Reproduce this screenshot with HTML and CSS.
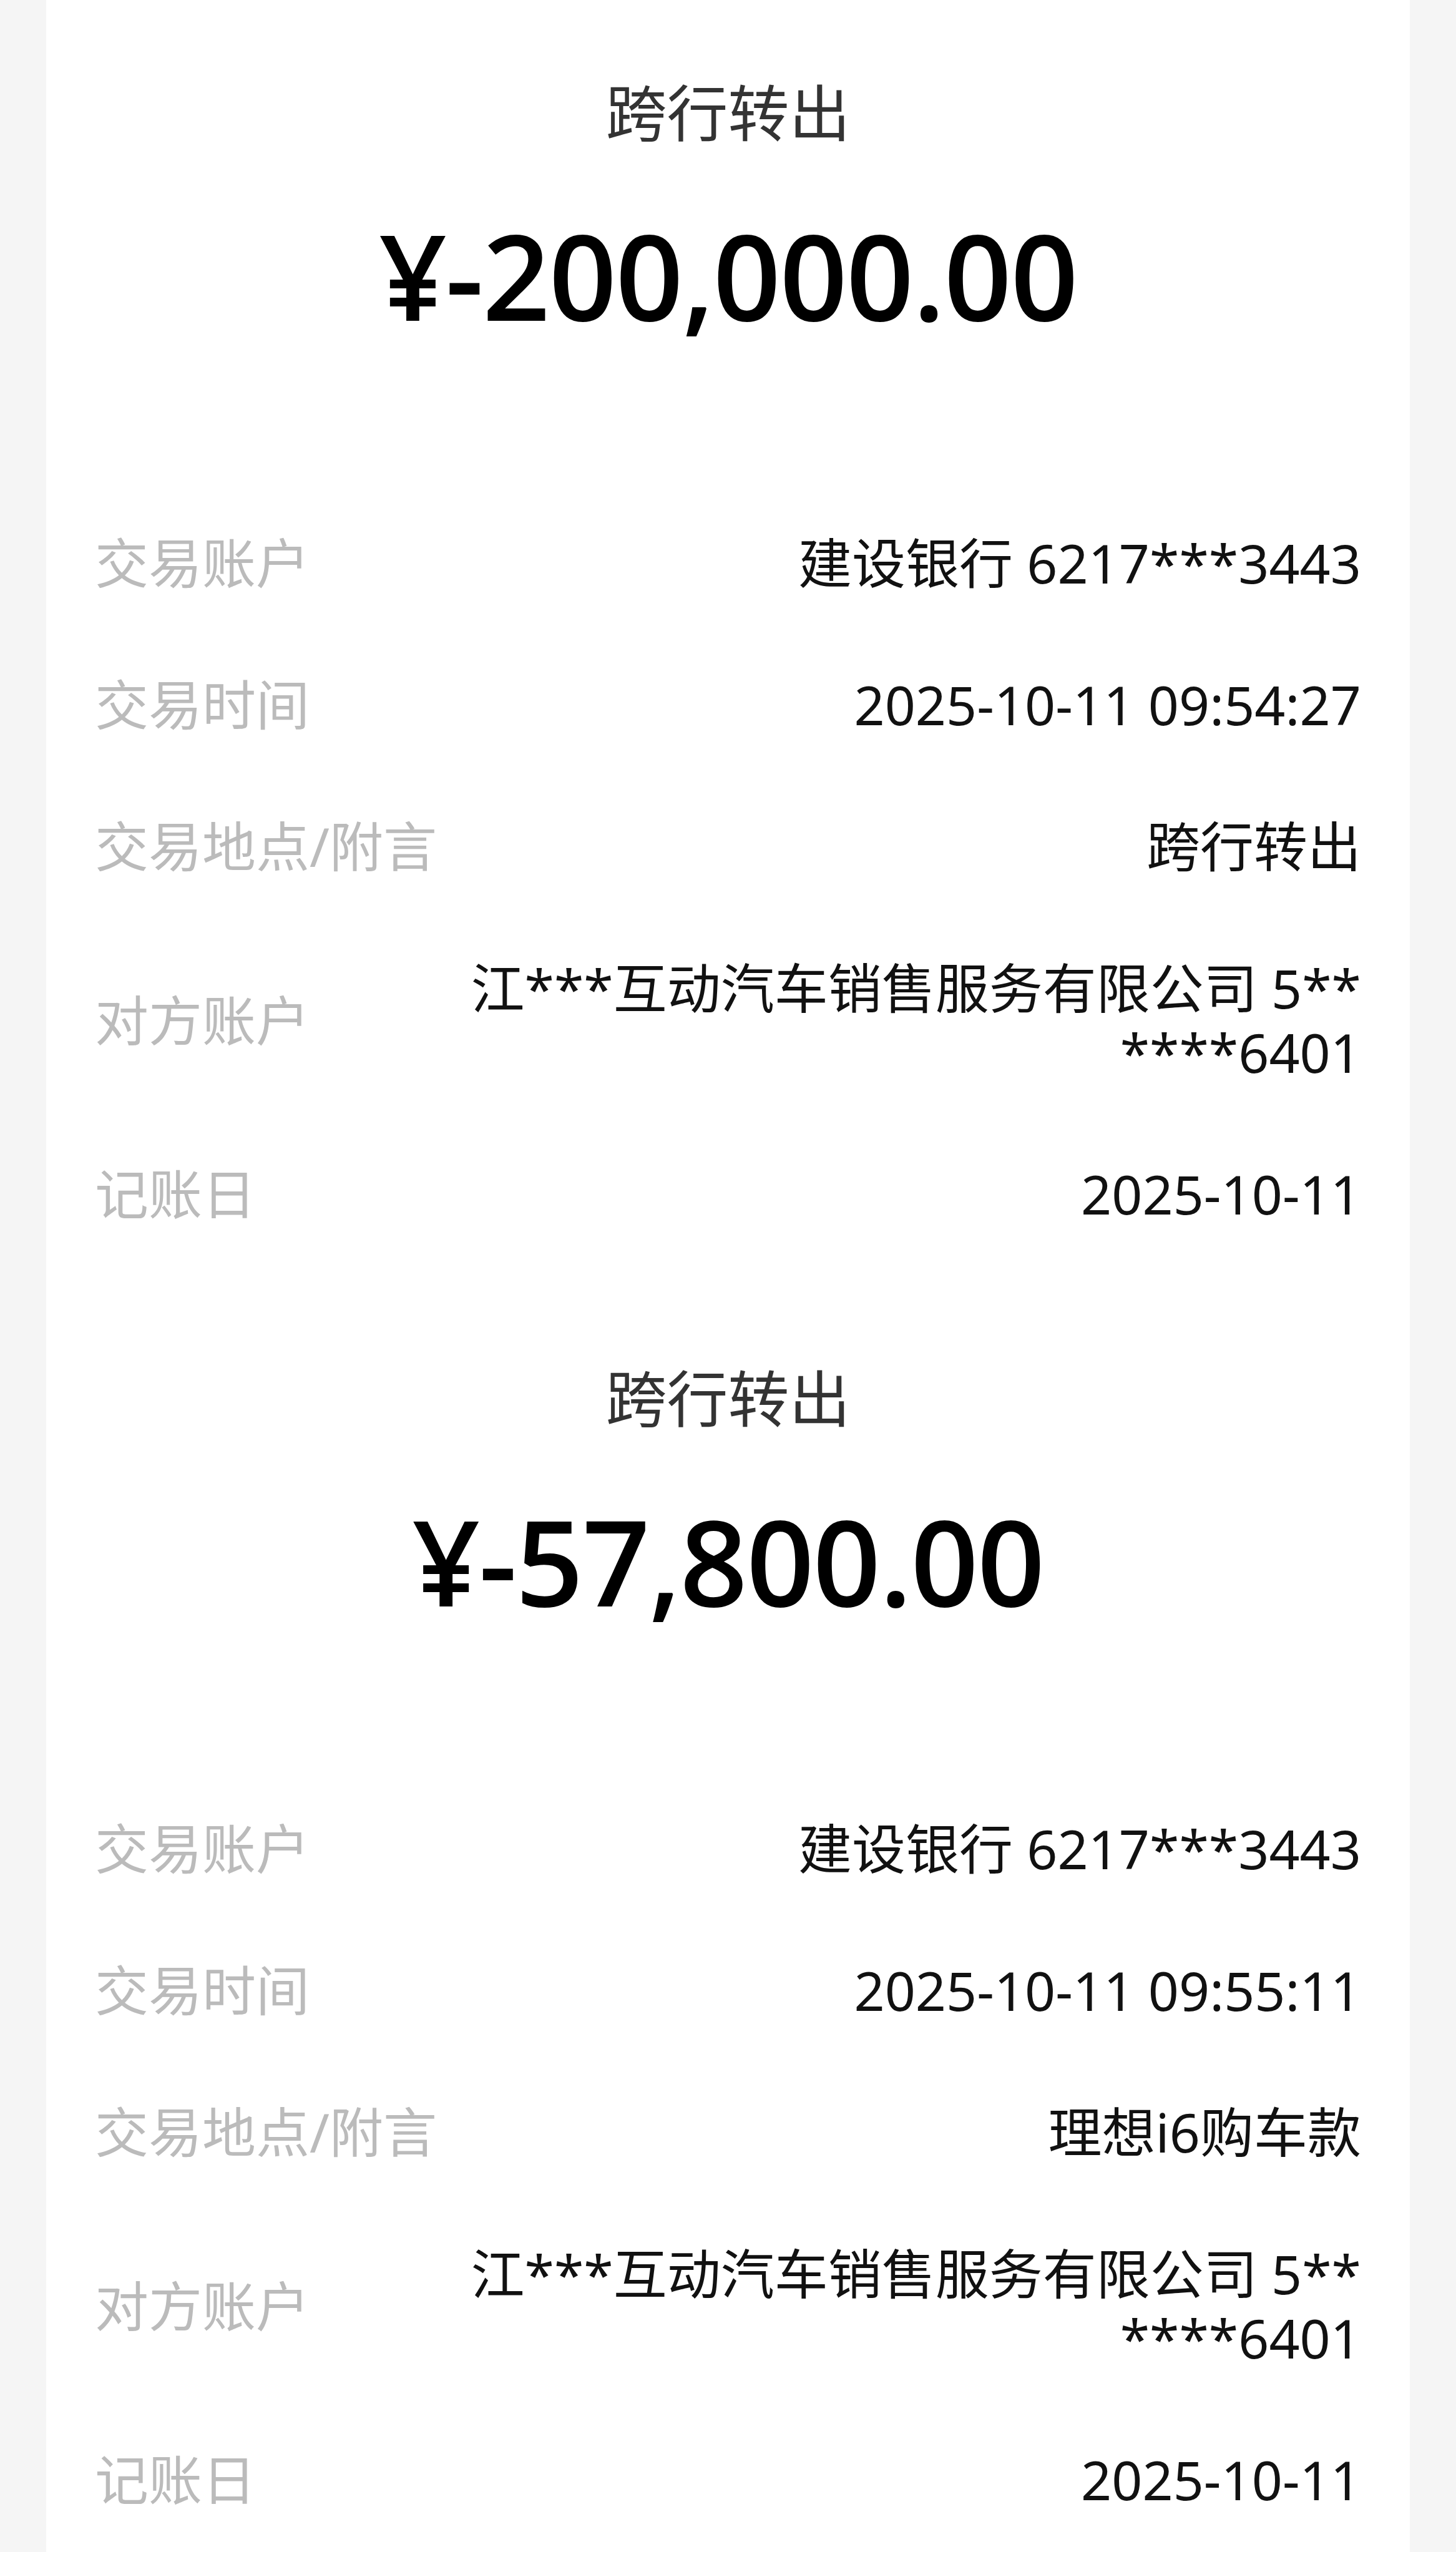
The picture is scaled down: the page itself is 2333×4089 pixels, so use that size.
FILE: index.html
```html
<!DOCTYPE html>
<html>
<head>
  <meta charset="utf-8">
  <title>交易详情</title>
  <link rel="stylesheet" href="styles.css">
</head>
<body>
  <div class="card">
    <div class="txn">
      <div class="txn-head">
        <div class="txn-type">跨行转出</div>
        <div class="txn-amount">¥-200,000.00</div>
      </div>
      <div class="detail-row">
        <span class="detail-label">交易账户</span>
        <span class="detail-value">建设银行 6217***3443</span>
      </div>
      <div class="detail-row">
        <span class="detail-label">交易时间</span>
        <span class="detail-value">2025-10-11 09:54:27</span>
      </div>
      <div class="detail-row">
        <span class="detail-label">交易地点/附言</span>
        <span class="detail-value">跨行转出</span>
      </div>
      <div class="detail-row">
        <span class="detail-label">对方账户</span>
        <span class="detail-value">江***互动汽车销售服务有限公司 5******6401</span>
      </div>
      <div class="detail-row">
        <span class="detail-label">记账日</span>
        <span class="detail-value">2025-10-11</span>
      </div>
    </div>

    <div class="txn">
      <div class="txn-head">
        <div class="txn-type">跨行转出</div>
        <div class="txn-amount">¥-57,800.00</div>
      </div>
      <div class="detail-row">
        <span class="detail-label">交易账户</span>
        <span class="detail-value">建设银行 6217***3443</span>
      </div>
      <div class="detail-row">
        <span class="detail-label">交易时间</span>
        <span class="detail-value">2025-10-11 09:55:11</span>
      </div>
      <div class="detail-row">
        <span class="detail-label">交易地点/附言</span>
        <span class="detail-value">理想i6购车款</span>
      </div>
      <div class="detail-row">
        <span class="detail-label">对方账户</span>
        <span class="detail-value">江***互动汽车销售服务有限公司 5******6401</span>
      </div>
      <div class="detail-row">
        <span class="detail-label">记账日</span>
        <span class="detail-value">2025-10-11</span>
      </div>
    </div>
  </div>
</body>
</html>
```

FILE: styles.css
```css
body {
  margin: 0;
  background-color: #f5f5f5;
  font-family: "Noto Sans", "Noto Sans CJK SC", sans-serif;
  color: #000;
}
.card {
  margin: 0 74px;
  min-height: 4089px;
  background-color: #fff;
  padding: 0 78px;
}
.txn {
  padding: 115px 0 34px 0;
}
.txn-head {
  text-align: center;
  margin-bottom: 232px;
}
.txn-type {
  font-size: 98px;
  line-height: 130px;
  color: #333;
}
.txn-amount {
  margin-top: 81px;
  font-family: "Open Sans", "Noto Sans", sans-serif;
  font-size: 190px;
  line-height: 230px;
  font-weight: 600;
  letter-spacing: -2px;
  color: #000;
}
.detail-row {
  display: flex;
  align-items: center;
  gap: 24px;
  padding: 62px 0;
  font-size: 86px;
  line-height: 103px;
}
.detail-label {
  flex: 0 0 560px;
  color: #bbb;
}
.detail-value {
  flex: 1;
  text-align: right;
  word-break: break-all;
  color: #111;
}
```
